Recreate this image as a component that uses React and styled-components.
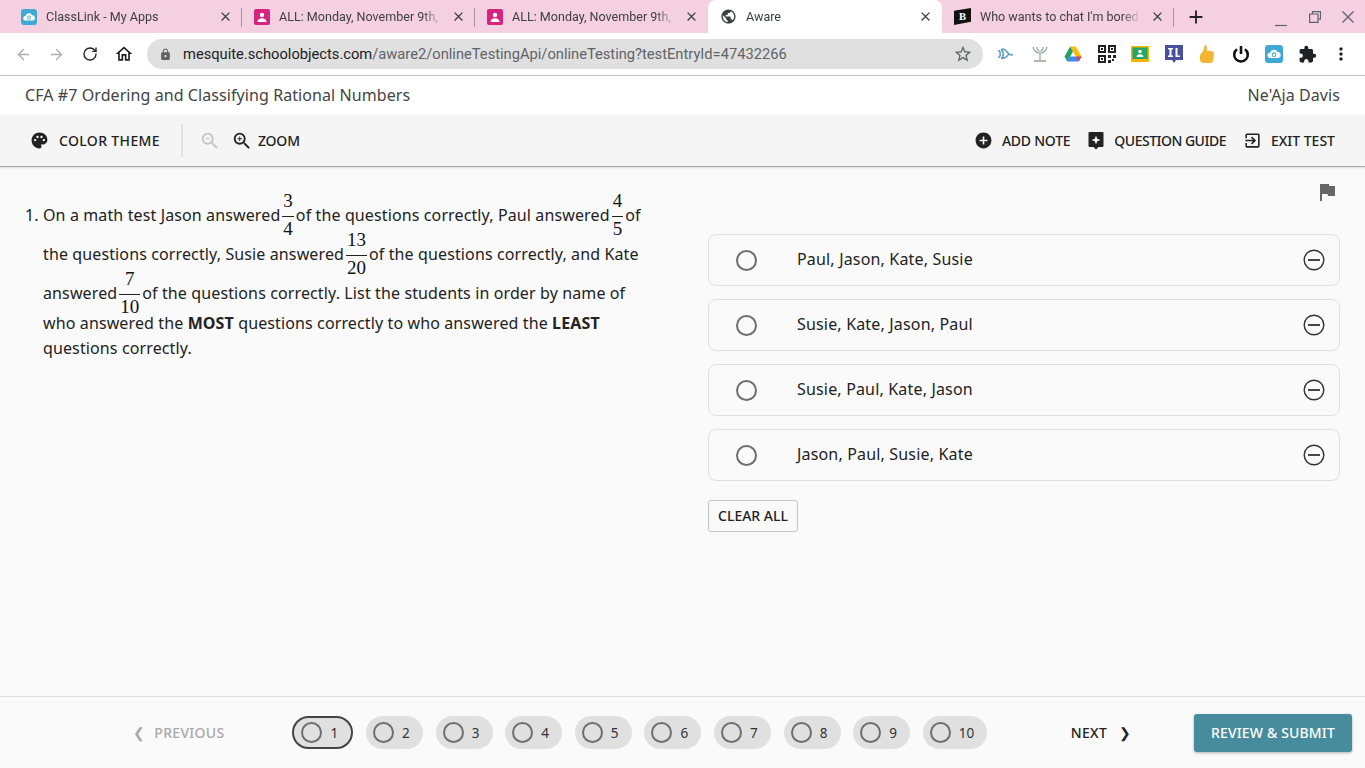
import React from 'react';
import styled, {createGlobalStyle} from 'styled-components';
import {MdPalette, MdZoomIn, MdZoomOut, MdAddCircle, MdFlag, MdLock, MdStarBorder, MdExtension, MdMoreVert, MdOutlineHome, MdClose, MdAdd, MdPublic, MdOutlineExitToApp} from 'react-icons/md';
import {ArrowLeft, ArrowRight, RotateCw} from 'lucide-react';

const UI = '"Noto Sans", "Open Sans", sans-serif';

const Global = createGlobalStyle`
    html, body { margin: 0; padding: 0; }
    body { font-family: ${UI}; background: #fafafa; overflow: hidden; }
`;

const Page = styled.div`
    width: 1365px;
    height: 768px;
    display: flex;
    flex-direction: column;
    overflow: hidden;
`;

/* browser chrome */
const TabStrip = styled.div`
    height: 33px;
    background: #f5d0e1;
    display: flex;
    align-items: stretch;
    padding-left: 9px;
`;

const Tab = styled.div`
    width: ${(props) => props.w}px;
    box-sizing: border-box;
    display: flex;
    align-items: center;
    gap: 9px;
    padding: 0 9px 0 12px;
    font: 12.55px Roboto, sans-serif;
    color: #3c4043;
    background: ${(props) => props.active ? '#fff' : 'transparent'};
    border-radius: ${(props) => props.active ? '8px 8px 0 0' : '0'};
    position: relative;
    &::after {
        content: '';
        display: ${(props) => props.sep ? 'block' : 'none'};
        position: absolute;
        right: 0;
        top: 8px;
        height: 19px;
        width: 1px;
        background: #a8929c;
    }
`;

const TabTitle = styled.span`
    flex: 1;
    white-space: nowrap;
    overflow: hidden;
    -webkit-mask-image: linear-gradient(90deg, #000 88%, transparent 100%);
    mask-image: linear-gradient(90deg, #000 88%, transparent 100%);
`;

const NewTab = styled.div`
    margin-left: 11px;
    display: flex;
    align-items: center;
    color: #202124;
`;

const WindowControls = styled.div`
    margin-left: auto;
    display: flex;
    align-items: center;
    gap: 21.5px;
    padding-right: 11px;
    color: #5f6368;
`;

const MinimizeIcon = styled.svg`
    margin-top: 9px;
`;

const ChromeBar = styled.div`
    height: 42px;
    background: #fff;
    display: flex;
    align-items: center;
    padding-left: 13px;
    border-bottom: 1px solid #c4c4c4;
`;

const NavButtons = styled.div`
    display: flex;
    align-items: center;
    gap: 13.5px;
    width: 134px;
    color: #202124;
`;

const IconCell = styled.span`
    width: 20px;
    height: 20px;
    display: flex;
    align-items: center;
    justify-content: center;
    flex-shrink: 0;
`;

const Omnibox = styled.div`
    width: 836px;
    height: 30px;
    border-radius: 15px;
    background: #e0e0e0;
    display: flex;
    align-items: center;
    padding: 0 10px 0 12px;
    box-sizing: border-box;
    font: 14.7px Roboto, sans-serif;
    color: #5f6368;
    gap: 11px;
    b { font-weight: 400; color: #202124; }
`;

const Url = styled.span`
    flex: 1;
    white-space: nowrap;
`;

const Extensions = styled.div`
    display: flex;
    align-items: center;
    margin-left: 13px;
    gap: 13.5px;
    color: #202124;
`;

/* test header */
const TitleBar = styled.div`
    height: 39px;
    box-sizing: border-box;
    padding: 0 25px 2px;
    background: #fff;
    display: flex;
    align-items: center;
    justify-content: space-between;
    font-size: 16px;
    letter-spacing: 0.08px;
    color: #444;
`;

const Toolbar = styled.div`
    height: 52px;
    box-sizing: border-box;
    background: #f5f5f5;
    border-bottom: 1px solid #aaa;
    box-shadow: 0 1px 2px rgba(0,0,0,0.12);
    display: flex;
    align-items: center;
    padding: 0 30px;
    position: relative;
`;

const ToolButton = styled.div`
    display: flex;
    align-items: center;
    gap: ${(props) => props.gap || 10}px;
    font-size: 14px;
    font-weight: 500;
    letter-spacing: ${(props) => props.ls || 0}px;
    color: #222;
    margin-left: ${(props) => props.ml || 0}px;
    white-space: nowrap;
`;

const ToolDivider = styled.div`
    width: 2px;
    height: 33px;
    background: #e2e2e2;
    margin: 0 16px 0 21px;
`;

const FadedIcon = styled.span`
    display: flex;
    color: #c4c4c4;
    margin-right: 10px;
`;

const Spacer = styled.div`
    flex: 1;
`;

/* question area */
const Main = styled.div`
    flex: 1;
    background: #fafafa;
    display: flex;
    padding-left: 25px;
    min-height: 0;
`;

const QuestionCol = styled.div`
    width: 683px;
    flex-shrink: 0;
    display: flex;
    align-items: baseline;
    padding-top: 27px;
    box-sizing: border-box;
    align-self: flex-start;
`;

const Num = styled.div`
    width: 18px;
    flex-shrink: 0;
    font-size: 16px;
    color: #222;
`;

const Stem = styled.div`
    width: 600px;
    font-size: 16px;
    line-height: 25px;
    letter-spacing: 0.12px;
    color: #222;
    b { font-weight: 700; }
`;

const Frac = styled.span`
    display: inline-flex;
    flex-direction: column;
    justify-content: center;
    align-items: center;
    height: 39px;
    box-sizing: border-box;
    padding-top: 2px;
    vertical-align: 14px;
    margin: 0 2px;
    font: 19px/22px "Liberation Serif", serif;
    letter-spacing: 0;
    color: #111;
`;

const FracTop = styled.span`
    flex-shrink: 0;
    border-bottom: 1px solid #222;
    padding: 0 0 4px;
    width: 100%;
    text-align: center;
`;

const FracBottom = styled.span`
    flex-shrink: 0;
    padding: 1px 1px 0;
`;

const AnswerCol = styled.div`
    width: 632px;
    display: flex;
    flex-direction: column;
    padding-top: 13px;
`;

const FlagRow = styled.div`
    height: 54px;
    display: flex;
    justify-content: flex-end;
    color: #666;
    padding-right: 1px;
`;

const OptionList = styled.div`
    display: flex;
    flex-direction: column;
    gap: 13px;
`;

const Option = styled.div`
    height: 52px;
    box-sizing: border-box;
    border: 1px solid #e0e0e0;
    border-radius: 8px;
    display: flex;
    align-items: center;
    padding: 0 14px 0 27px;
    font-size: 16px;
    letter-spacing: 0.17px;
    color: #222;
`;

const Radio = styled.span`
    width: 21px;
    height: 21px;
    box-sizing: border-box;
    border: 2px solid #6e6e6e;
    border-radius: 50%;
    display: inline-block;
    flex-shrink: 0;
`;

const OptionText = styled.span`
    flex: 1;
    margin-left: 40px;
    margin-top: -2px;
`;

const EliminateIcon = styled.svg`
    width: 22px;
    height: 22px;
    margin-top: -1px;
    flex-shrink: 0;
`;

const ClearAll = styled.div`
    margin-top: 19px;
    width: 90px;
    height: 32px;
    box-sizing: border-box;
    padding-bottom: 2px;
    border: 1px solid #c4c4c4;
    border-radius: 3px;
    display: flex;
    align-items: center;
    justify-content: center;
    font-size: 14px;
    font-weight: 500;
    color: #222;
`;

/* footer */
const Footer = styled.div`
    height: 72px;
    box-sizing: border-box;
    border-top: 1px solid #e0e0e0;
    background: #fafafa;
    display: flex;
    align-items: center;
    padding: 0 13px 0 133px;
`;

const NavLink = styled.div`
    display: flex;
    align-items: center;
    gap: ${(props) => props.gap}px;
    font-size: 14px;
    font-weight: 500;
    letter-spacing: 0.3px;
    color: ${(props) => props.off ? '#a9a9a9' : '#222'};
    white-space: nowrap;
`;

const Pills = styled.div`
    display: flex;
    gap: 12.6px;
    margin: 0 84px 0 68px;
`;

const Pill = styled.div`
    height: 33px;
    width: ${(props) => props.w}px;
    box-sizing: border-box;
    border-radius: 17px;
    background: #e0e0e0;
    border: ${(props) => props.current ? '2px solid #444' : 'none'};
    display: flex;
    align-items: center;
    padding-left: 7px;
    gap: 8px;
    font-size: 13.5px;
    color: #333;
`;

const Submit = styled.div`
    margin-left: auto;
    width: 158px;
    height: 38px;
    border-radius: 3px;
    background: #468c9c;
    box-shadow: 0 1px 3px rgba(0,0,0,0.3);
    color: #fff;
    display: flex;
    align-items: center;
    justify-content: center;
    font-size: 14px;
    font-weight: 500;
    letter-spacing: 0.15px;
`;

/* drawn favicons */
const CloudIcon = ({size = 16}) => (
    <svg width={size} height={size} viewBox="0 0 16 16">
        <rect width="16" height="16" rx="3" fill="#3fa9d6" />
        <path d="M4.5 11.5a2.3 2.3 0 0 1 0-4.6 3.5 3.5 0 0 1 6.6-.6 2.6 2.6 0 0 1 .4 5.2z" fill="#fff" />
        <circle cx="8" cy="8.6" r="1.6" fill="none" stroke="#3fa9d6" strokeWidth="0.9" />
    </svg>
);

const PersonIcon = () => (
    <svg width="16" height="16" viewBox="0 0 16 16">
        <rect width="16" height="16" rx="2" fill="#d5237f" />
        <circle cx="8" cy="6" r="2.2" fill="#fff" />
        <path d="M3.5 13c0-2.6 2-3.8 4.5-3.8s4.5 1.2 4.5 3.8z" fill="#fff" />
    </svg>
);

const BlogIcon = () => (
    <svg width="17" height="17" viewBox="0 0 16 16">
        <path d="M0 2.500 16 0v13L0 16z" fill="#111" />
        <text x="4.600" y="11.600" fontFamily="Liberation Serif" fontWeight="700" fontSize="10" fill="#fff">B</text>
    </svg>
);

const ExtSwirl = () => (
    <svg width="20" height="20" viewBox="0 0 20 20" fill="none" stroke="#5b9cc4" strokeWidth="1.5">
        <path d="M2 7c3-2 3 8 0 6M5 6c3 1 3 8 0 8M5 6c3-3 6 2 8 4 1 1 3 1 4 1M5 14c3 2 6-2 8-4" />
    </svg>
);

const ExtFigure = () => (
    <svg width="20" height="20" viewBox="0 0 20 20" fill="none" stroke="#8fa7a8" strokeWidth="1.2">
        <path d="M3 3c1 4 4 6 7 6s6-2 7-6M7 3c0 3 1 4 3 4s3-1 3-4M10 9v7" />
        <path d="M4 17h12" stroke="#a79a86" strokeWidth="1.5" />
    </svg>
);

const ExtDrive = () => (
    <svg width="18" height="18" viewBox="0 0 18 18">
        <path d="M6.200 1.500h5.600l5.700 10h-5.600z" fill="#fbbc04" />
        <path d="M6.200 1.500 0.500 11.500l2.800 5 5.700-10z" fill="#1fa463" />
        <path d="M3.300 16.500h11.400l2.800-5H6z" fill="#4285f4" />
        <path d="M11.900 11.500h5.600l-2.800 5z" fill="#ea4335" />
    </svg>
);

const ExtQr = () => (
    <svg width="18" height="18" viewBox="0 0 18 18">
        <rect width="18" height="18" fill="#fff" />
        <path d="M0 0h8v8H0zM2 2v4h4V2zM10 0h8v8h-8zM12 2v4h4V2zM0 10h8v8H0zM2 12v4h4v-4zM3 3h2v2H3zM13 3h2v2h-2zM3 13h2v2H3zM10 10h3v3h-3zM15 10h3v3h-3zM10 15h3v3h-3zM14 14h2v2h-2z" fill="#222" fillRule="evenodd" />
    </svg>
);

const ExtClassroom = () => (
    <svg width="18" height="16" viewBox="0 0 18 16">
        <rect width="18" height="16" rx="1" fill="#f4b400" />
        <rect x="1.500" y="1.500" width="15" height="11.500" fill="#25a667" />
        <circle cx="9" cy="5.500" r="1.800" fill="#fff" />
        <path d="M5.500 11c0-2 1.600-2.800 3.500-2.800s3.500.8 3.500 2.800z" fill="#fff" />
    </svg>
);

const ExtIl = () => (
    <svg width="18" height="18" viewBox="0 0 18 18">
        <path d="M0 0h18v15h-7l-2 3-2-3H0z" fill="#4a4f9c" />
        <path d="M3 3h5v1.500H6.500v6H8V12H3v-1.500h1.500v-6H3zM10.500 3h2v7.500H15V12h-4.500z" fill="#fff" />
    </svg>
);

const ExtThumb = () => (
    <svg width="16" height="20" viewBox="0 0 16 20">
        <path d="M6 1c2 0 2 2 2 6h4c2 0 3 1 3 3l-1 7c0 1-1 2-3 2H5c-2 0-4-1-4-4v-3c0-2 2-3 3-5z" fill="#f5b530" />
    </svg>
);

const ExtPower = () => (
    <svg width="18" height="18" viewBox="0 0 18 18" fill="none" stroke="#111" strokeWidth="2.600">
        <path d="M5 4.200a6.800 6.800 0 1 0 8 0" />
        <path d="M9 1v8" />
    </svg>
);

const GuideIcon = () => (
    <svg width="16" height="19" viewBox="0 0 16 19">
        <path d="M1.500 1h13a1 1 0 0 1 1 1v13a1 1 0 0 1-1 1H10.500L8 18.500 5.500 16H1.500a1 1 0 0 1-1-1V2a1 1 0 0 1 1-1z" fill="#222" />
        <path d="M8 4.500l1.200 3.300 3.300 1.200-3.300 1.200L8 13.500l-1.200-3.300L3.500 9l3.300-1.200z" fill="#fff" />
    </svg>
);

const options = ['Paul, Jason, Kate, Susie', 'Susie, Kate, Jason, Paul', 'Susie, Paul, Kate, Jason', 'Jason, Paul, Susie, Kate'];
const pills = [1, 2, 3, 4, 5, 6, 7, 8, 9, 10];
const extensions = [ExtSwirl, ExtFigure, ExtDrive, ExtQr, ExtClassroom, ExtIl, ExtThumb, ExtPower, () => <CloudIcon size={18} />, () => <MdExtension size={19} />, () => <MdMoreVert size={20} />];

const Fraction = ({top, bottom}) => (
    <Frac><FracTop>{top}</FracTop><FracBottom>{bottom}</FracBottom></Frac>
);

const App = () => {
    return (
        <Page>
            <Global />
            <TabStrip>
                <Tab w={233} sep><CloudIcon /><TabTitle>ClassLink - My Apps</TabTitle><MdClose size={15} /></Tab>
                <Tab w={233} sep><PersonIcon /><TabTitle>ALL: Monday, November 9th, 2</TabTitle><MdClose size={15} /></Tab>
                <Tab w={233}><PersonIcon /><TabTitle>ALL: Monday, November 9th, 2</TabTitle><MdClose size={15} /></Tab>
                <Tab w={234} active><MdPublic size={17} /><TabTitle>Aware</TabTitle><MdClose size={15} /></Tab>
                <Tab w={232} sep><BlogIcon /><TabTitle>Who wants to chat I'm bored</TabTitle><MdClose size={15} /></Tab>
                <NewTab><MdAdd size={22} /></NewTab>
                <WindowControls>
                    <MinimizeIcon width="12" height="12" viewBox="0 0 12 12"><path d="M0 10.500h12" stroke="currentColor" strokeWidth="1.200" /></MinimizeIcon>
                    <svg width="12" height="12" viewBox="0 0 12 12" fill="none" stroke="currentColor" strokeWidth="1.200"><path d="M3.500 2.500V.6h8v7.500H9M.6 3h8.400v8.400H.6z" /></svg>
                    <svg width="12" height="12" viewBox="0 0 12 12" fill="none" stroke="currentColor" strokeWidth="1.300"><path d="M.5.5l11 11M11.500.5l-11 11" /></svg>
                </WindowControls>
            </TabStrip>
            <ChromeBar>
                <NavButtons>
                    <IconCell><ArrowLeft size={17} color="#b0b0b0" /></IconCell>
                    <IconCell><ArrowRight size={17} color="#b0b0b0" /></IconCell>
                    <IconCell><RotateCw size={16} /></IconCell>
                    <IconCell><MdOutlineHome size={20} /></IconCell>
                </NavButtons>
                <Omnibox>
                    <MdLock size={13} />
                    <Url><b>mesquite.schoolobjects.com</b>/aware2/onlineTestingApi/onlineTesting?testEntryId=47432266</Url>
                    <MdStarBorder size={20} />
                </Omnibox>
                <Extensions>
                    {extensions.map((Ext, i) => <IconCell key={i}><Ext /></IconCell>)}
                </Extensions>
            </ChromeBar>
            <TitleBar>
                <span>CFA #7 Ordering and Classifying Rational Numbers</span>
                <span>Ne'Aja Davis</span>
            </TitleBar>
            <Toolbar>
                <ToolButton gap={10} ls={0.35}><MdPalette size={19} />COLOR THEME</ToolButton>
                <ToolDivider />
                <FadedIcon><MdZoomOut size={22} /></FadedIcon>
                <ToolButton gap={5} ls={-0.2}><MdZoomIn size={22} />ZOOM</ToolButton>
                <Spacer />
                <ToolButton gap={9} ls={-0.25}><MdAddCircle size={19} />ADD NOTE</ToolButton>
                <ToolButton gap={10} ml={18} ls={-0.5}><GuideIcon />QUESTION GUIDE</ToolButton>
                <ToolButton gap={9} ml={17}><MdOutlineExitToApp size={19} />EXIT TEST</ToolButton>
            </Toolbar>
            <Main>
                <QuestionCol>
                    <Num>1.</Num>
                    <Stem>
                        On a math test Jason answered<Fraction top="3" bottom="4" />of the questions correctly, Paul answered<Fraction top="4" bottom="5" />of the questions correctly, Susie answered<Fraction top="13" bottom="20" />of the questions correctly, and Kate answered<Fraction top="7" bottom="10" />of the questions correctly. List the students in order by name of who answered the <b>MOST</b> questions correctly to who answered the <b>LEAST</b> questions correctly.
                    </Stem>
                </QuestionCol>
                <AnswerCol>
                    <FlagRow><MdFlag size={24} /></FlagRow>
                    <OptionList>
                        {options.map((o) => (
                            <Option key={o}>
                                <Radio />
                                <OptionText>{o}</OptionText>
                                <EliminateIcon viewBox="0 0 22 22" fill="none" stroke="#333">
                                    <circle cx="11" cy="11" r="9.800" strokeWidth="1.400" />
                                    <path d="M5 11h12" strokeWidth="1.800" />
                                </EliminateIcon>
                            </Option>
                        ))}
                    </OptionList>
                    <ClearAll>CLEAR ALL</ClearAll>
                </AnswerCol>
            </Main>
            <Footer>
                <NavLink off gap={9}><span>❮</span>PREVIOUS</NavLink>
                <Pills>
                    {pills.map((n) => (
                        <Pill key={n} current={n === 1} w={n === 1 ? 61 : n === 10 ? 64 : 57}>
                            <Radio />{n}
                        </Pill>
                    ))}
                </Pills>
                <NavLink gap={12}>NEXT<span>❯</span></NavLink>
                <Submit>REVIEW & SUBMIT</Submit>
            </Footer>
        </Page>
    );
};

export default App;
